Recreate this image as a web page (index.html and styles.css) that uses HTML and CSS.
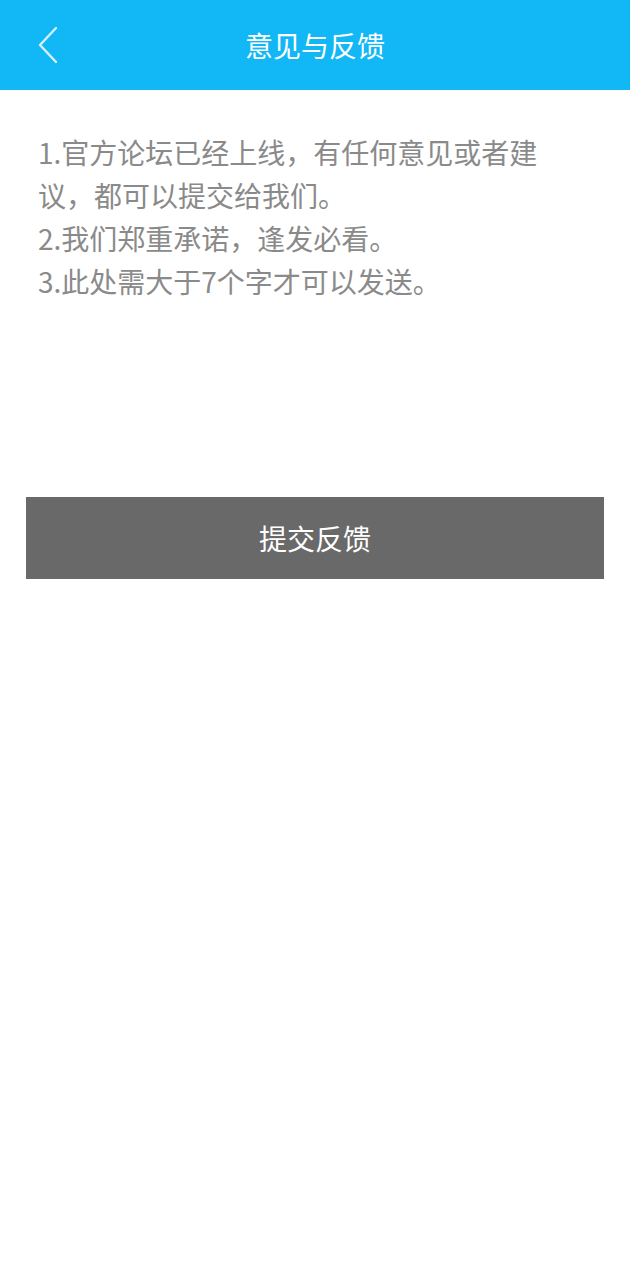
FILE: index.html
```html
<!DOCTYPE html>
<html lang="zh-CN">
<head>
<meta charset="utf-8">
<title>意见与反馈</title>
<link rel="stylesheet" href="styles.css">
</head>
<body>
<header class="bar">
  <svg class="back" width="24" height="40" viewBox="0 0 24 40"><polyline points="19,3 3,20 19,37" fill="none" stroke="#d6f1fd" stroke-width="2.4" stroke-linecap="round" stroke-linejoin="round"/></svg>
  <h1 class="title">意见与反馈</h1>
</header>
<main class="content">
  <div class="hint">1.官方论坛已经上线，有任何意见或者建议，都可以提交给我们。<br>2.我们郑重承诺，逢发必看。<br>3.此处需大于7个字才可以发送。</div>
  <button class="submit">提交反馈</button>
</main>
</body>
</html>
```
FILE: styles.css
```css
html, body { margin: 0; padding: 0; background: #fff; }
body { font-family: "Noto Sans CJK SC", "Noto Sans", sans-serif; width: 630px; height: 1280px; }
.bar { height: 90px; background: #12b7f5; display: flex; align-items: center; justify-content: center; position: relative; }
.back { position: absolute; left: 37px; top: 25px; }
.title { margin: 0; font-size: 28px; font-weight: 400; color: #fff; }
.content { padding: 0 26px; }
.hint { padding: 41px 0 0 12px; box-sizing: border-box; height: 407px; width: 527px; color: #8a8a8a; font-size: 28px; line-height: 43px; }
.submit { display: block; width: 578px; height: 82px; border: 0; background: #696969; color: #fff; font-family: inherit; font-size: 28px; padding: 0; }
```
